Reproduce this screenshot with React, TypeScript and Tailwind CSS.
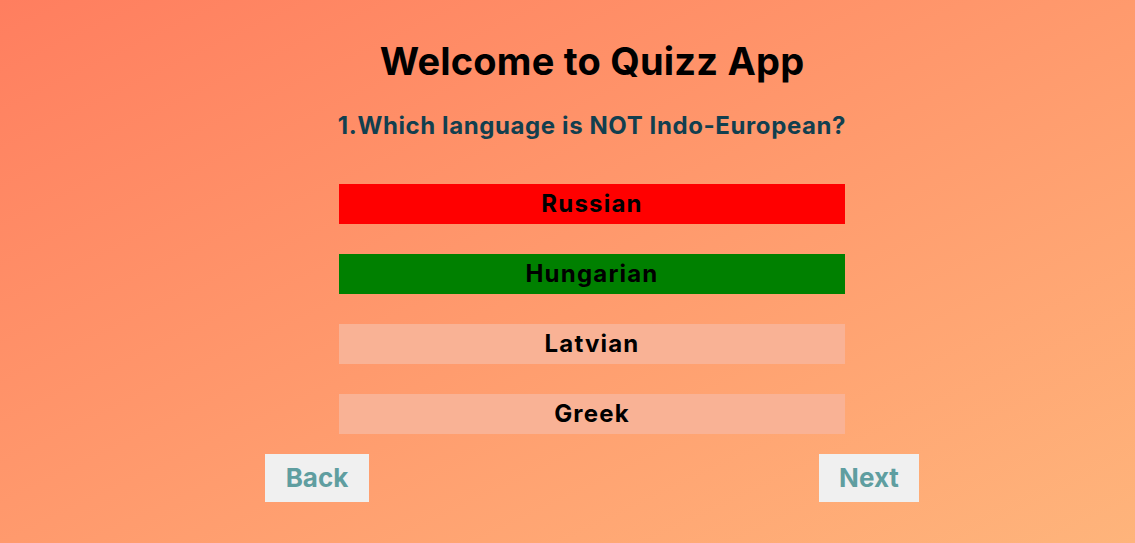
import React from "react";

const options = [
  { label: "Russian", cls: "bg-[#ff0000]" },
  { label: "Hungarian", cls: "bg-[#008000]" },
  { label: "Latvian", cls: "bg-[#f9b295]" },
  { label: "Greek", cls: "bg-[#f9b295]" },
];

export default function App() {
  return (
    <div
      className="w-full h-[543px] bg-gradient-to-br from-[#ff7e5f] to-[#feb47b] overflow-hidden"
      style={{ fontFamily: "Inter, 'Noto Sans', sans-serif" }}
    >
      <div className="flex flex-col items-center pl-[49px]">
        <h1 className="mt-[36px] h-[50px] text-[38px] leading-[50px] font-bold text-black tracking-[0.2px]">Welcome to Quizz App</h1>
        <h2 className="mt-[24px] h-[32px] text-[24px] leading-[32px] font-bold text-[#123f4f] tracking-[0.6px]">1.Which language is NOT Indo-European?</h2>
        <div className="mt-[42px] flex flex-col gap-[30px] w-[506px]">
          {options.map((o) => (
            <div key={o.label} className={`h-[40px] flex items-center justify-center text-[24px] font-bold text-black tracking-[1.2px] ${o.cls}`}>
              {o.label}
            </div>
          ))}
        </div>
        <div className="mt-[20px] w-[654px] flex justify-between">
          <button className="w-[104px] h-[48px] pb-[2px] bg-[#f0f0f0] text-[#5f9ea0] text-[26px] font-bold">Back</button>
          <button className="w-[100px] h-[48px] pb-[2px] bg-[#f0f0f0] text-[#5f9ea0] text-[26px] font-bold">Next</button>
        </div>
      </div>
    </div>
  );
}
